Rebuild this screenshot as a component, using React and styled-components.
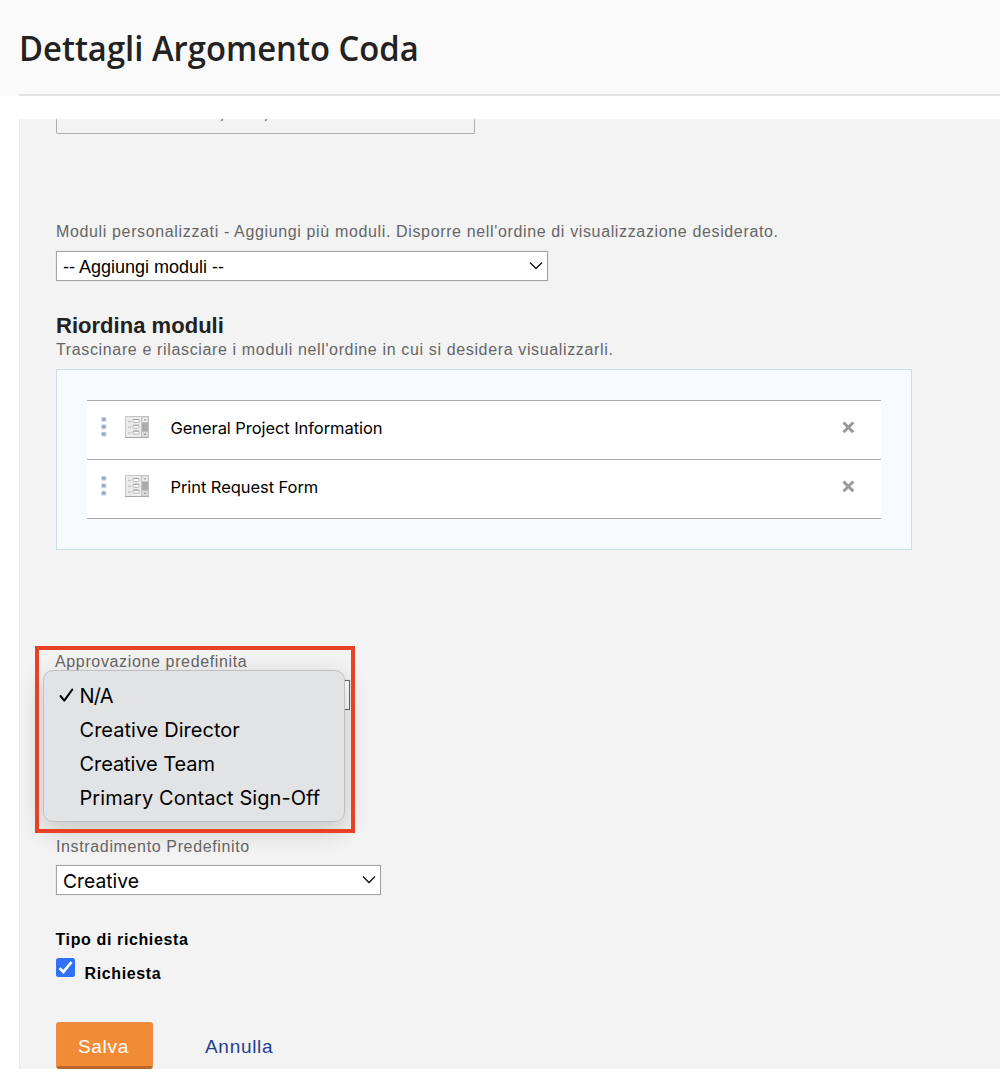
import React, { useState } from "react";
import styled, { createGlobalStyle } from "styled-components";

const Global = createGlobalStyle`
  *, *::before, *::after { box-sizing: border-box; }
  body { margin: 0; background: #fff; font-family: "Liberation Sans", Arial, sans-serif; }
`;

const Page = styled.div`
  height: 1081px;
  overflow: hidden;
  background: #fff;
`;

const Header = styled.header`
  height: 96px;
  padding-left: 19px;
  background: #fafafa;
`;

const Title = styled.h1`
  height: 96px;
  margin: 0;
  border-bottom: 2px solid #e3e3e3;
  color: #222;
  font: 600 35px/95px "Open Sans", sans-serif;
  white-space: nowrap;
`;

const TitleText = styled.span`
  display: inline-block;
  transform: scaleX(0.937);
  transform-origin: 0 50%;
`;

const Panel = styled.main`
  display: flex;
  flex-direction: column;
  align-items: flex-start;
  height: 950px;
  margin: 23px 0 0 19px;
  padding-left: 36px;
  border-left: 1px solid #e9e9e9;
  background: #f3f3f3;
  overflow: hidden;

  > * { flex-shrink: 0; }
`;

const ClippedInput = styled.div`
  display: flex;
  gap: 42px;
  width: 419px;
  height: 15px;
  padding-left: 164px;
  overflow: hidden;
  border: 1px solid #adadad;
  border-top: 0;
  border-radius: 0 0 2px 2px;
`;

const Descender = styled.i`
  width: 2px;
  height: 2px;
  background: #7b93bd;
  transform: skewX(-20deg);
`;

const Label = styled.div`
  height: 20px;
  margin-top: ${(p) => p.$top || 0}px;
  margin-left: ${(p) => p.$shift || 0}px;
  color: #666;
  font-size: 16px;
  line-height: ${(p) => p.$line || 20}px;
  letter-spacing: 0.64px;
  white-space: nowrap;
`;

const SelectBox = styled.div`
  display: flex;
  align-items: center;
  justify-content: space-between;
  width: ${(p) => p.$width}px;
  height: 30px;
  margin-top: ${(p) => p.$top}px;
  padding: 0 4px 0 6px;
  border: 1px solid ${(p) => p.$border || "#a3a3a3"};
  outline: 1px solid #ececec;
  background: #fff;
  color: #000;
  font: ${(p) => p.$font || '18px "Liberation Sans", Arial, sans-serif'};
`;

const SelectText = styled.span`
  padding-top: ${(p) => p.$drop}px;
`;

const Heading = styled.h2`
  height: 26px;
  margin: 32px 0 0;
  color: #222;
  font-size: 22px;
  line-height: 26px;
  letter-spacing: 0.03px;
`;

const SortArea = styled.section`
  width: 856px;
  height: 181px;
  margin-top: 9px;
  padding: 30px 30px 0;
  border: 1px solid #c9dfea;
  background: #f6fbff;
`;

const SortList = styled.ul`
  margin: 0;
  padding: 0;
  border-top: 1px solid #aaa;
  list-style: none;
`;

const SortRow = styled.li`
  display: flex;
  align-items: center;
  height: 59px;
  padding: 0 26px 6px 14px;
  border-bottom: 1px solid #aaa;
  background: #fff;
`;

const RowName = styled.span`
  flex: 1;
  padding: 1px 0 0 21.5px;
  color: #000;
  font: 16.5px/24px Inter, sans-serif;
  letter-spacing: -0.07px;
`;

const ApprovalField = styled.section`
  position: relative;
  width: 294px;
  margin-top: 101px;
`;

const Highlight = styled.div`
  position: absolute;
  top: -5px;
  left: -21px;
  width: 320px;
  height: 187px;
  border: 4px solid #e94125;
`;

const Popup = styled.ul`
  position: absolute;
  top: 19px;
  left: -13px;
  width: 302px;
  height: 152px;
  margin: 0;
  padding: 8px 0;
  border: 1px solid #c0c0c1;
  border-radius: 10px;
  background: #e2e3e5;
  box-shadow: 0 8px 26px rgba(0, 0, 0, 0.2);
  list-style: none;
`;

const Option = styled.li`
  display: flex;
  align-items: center;
  height: 34px;
  padding-left: 15px;
  color: #000;
  font: 20px/34px Inter, sans-serif;
  letter-spacing: ${(p) => p.$spacing}px;
  white-space: nowrap;
`;

const CheckSlot = styled.span`
  display: flex;
  width: 20.5px;
`;

const Strong = styled.div`
  height: 20px;
  margin-top: ${(p) => p.$top || 0}px;
  margin-left: -0.5px;
  color: #000;
  font-size: 16px;
  font-weight: 700;
  line-height: 22px;
  letter-spacing: 0.62px;
`;

const CheckRow = styled.button`
  display: flex;
  align-items: flex-start;
  gap: 10px;
  margin-top: 9px;
  padding: 0;
  border: 0;
  background: none;
  font-family: inherit;
  text-align: left;
`;

const CheckSquare = styled.span`
  display: flex;
  width: 19px;
  height: 19px;
  border-radius: 2.5px;
  background: #2f72f6;
`;

const Actions = styled.div`
  display: flex;
  gap: 52px;
  margin-top: 39px;
`;

const SaveButton = styled.button`
  width: 97px;
  height: 47px;
  padding: 4px 2px 0 0;
  border: 1px solid #ee8c45;
  border-bottom: 3px solid #bb6528;
  border-radius: 3px;
  background: #f18b36;
  color: #fff;
  font: 19px "Liberation Sans", Arial, sans-serif;
  letter-spacing: 0.7px;
`;

const CancelLink = styled.a`
  color: #1f3f91;
  font-size: 19px;
  line-height: 49px;
  letter-spacing: 0.7px;
`;

const Chevron = () => (
  <svg width="14" height="10" viewBox="0 0 14 10" fill="none">
    <path d="M1 1.5 7 7.5 13 1.5" stroke="#111" strokeWidth="1.3" />
  </svg>
);

const Grip = () => (
  <svg width="6" height="20" viewBox="0 0 6 20">
    {[0, 7.4, 14.8].map((y) => (
      <g key={y}>
        <rect x="0.3" y={y + 0.2} width="5" height="4.6" rx="1" fill="#c3d0da" />
        <rect x="1" y={y + 0.8} width="3.4" height="2.8" fill="#98aaba" />
      </g>
    ))}
  </svg>
);

const IconCell = styled.span`
  display: flex;
  margin-left: 18px;
`;

const FormIcon = () => (
  <svg width="24" height="22" viewBox="0 0 24 22">
    <rect x="0.5" y="0.5" width="23" height="21" fill="#ebebeb" stroke="#c6c6c6" />
    <path d="M0 21.5h24" stroke="#a5a5a5" />
    <rect x="16.5" y="1" width="6.5" height="20" fill="#d5d5d5" stroke="#b9b9b9" strokeWidth="0.7" />
    <rect x="17" y="6.5" width="6" height="9" fill="#ababab" />
    <rect x="17.5" y="1.5" width="5" height="4.7" fill="#eee" />
    <rect x="17.5" y="16" width="5" height="4.5" fill="#ddd" />
    <path d="M19.3 3.9h1.4M19.3 18.4h1.4" stroke="#777" strokeWidth="1.3" />
    {[3.5, 9.3, 15.1].map((y) => (
      <g key={y}>
        <rect x="7.8" y={y} width="6.4" height="3" rx="1" fill="#fafafa" stroke="#bababa" />
        <path d={`M8 ${y}h6`} stroke="#a2a2a2" />
        <path d={`M3 ${y + 2}h3`} stroke="#bcbcbc" strokeWidth="1.2" />
      </g>
    ))}
  </svg>
);

const RemoveIcon = () => (
  <svg width="13" height="13" viewBox="0 0 13 13">
    <path d="M1.5 1.5 11.3 11.2M11.3 1.5 1.5 11.2" stroke="#999" strokeWidth="3" />
  </svg>
);

const MenuCheck = () => (
  <svg width="16" height="17" viewBox="0 0 16 17" fill="none">
    <path d="M1.5 8 5.3 12.6 13.3 1.5" stroke="#000" strokeWidth="2" strokeLinecap="round" strokeLinejoin="round" />
  </svg>
);

const BoxCheck = () => (
  <svg width="19" height="19" viewBox="0 0 19 19" fill="none">
    <path d="M3.6 10.1 7.4 13.9 15.5 4" stroke="#fff" strokeWidth="2.7" />
  </svg>
);

const forms = ["General Project Information", "Print Request Form"];

const approvals = [
  { name: "N/A", spacing: -0.8 },
  { name: "Creative Director", spacing: 0.03 },
  { name: "Creative Team", spacing: -0.08 },
  { name: "Primary Contact Sign-Off", spacing: 0.07 },
];

export default function App() {
  const [checked, setChecked] = useState(true);
  return (
    <Page>
      <Global />
      <Header>
        <Title>
          <TitleText>Dettagli Argomento Coda</TitleText>
        </Title>
      </Header>
      <Panel>
        <ClippedInput>
          <Descender />
          <Descender />
        </ClippedInput>
        <Label $top={88}>
          Moduli personalizzati - Aggiungi più moduli. Disporre nell'ordine di visualizzazione desiderato.
        </Label>
        <SelectBox $width={492} $top={9}>
          <SelectText $drop={3}>-- Aggiungi moduli --</SelectText>
          <Chevron />
        </SelectBox>
        <Heading>Riordina moduli</Heading>
        <Label $top={1}>Trascinare e rilasciare i moduli nell'ordine in cui si desidera visualizzarli.</Label>
        <SortArea>
          <SortList>
            {forms.map((name) => (
              <SortRow key={name}>
                <Grip />
                <IconCell>
                  <FormIcon />
                </IconCell>
                <RowName>{name}</RowName>
                <RemoveIcon />
              </SortRow>
            ))}
          </SortList>
        </SortArea>
        <ApprovalField>
          <Label $shift={-1} $line={22}>Approvazione predefinita</Label>
          <SelectBox $width={294} $top={9} $border="#666" />
          <Popup>
            {approvals.map(({ name, spacing }, index) => (
              <Option key={name} $spacing={spacing}>
                <CheckSlot>{index === 0 && <MenuCheck />}</CheckSlot>
                {name}
              </Option>
            ))}
          </Popup>
          <Highlight />
        </ApprovalField>
        <Label $top={126} $line={22}>Instradimento Predefinito</Label>
        <SelectBox $width={325} $top={9} $font="19.3px Inter, sans-serif">
          <SelectText $drop={1}>Creative</SelectText>
          <Chevron />
        </SelectBox>
        <Strong $top={34}>Tipo di richiesta</Strong>
        <CheckRow type="button" role="checkbox" aria-checked={checked} onClick={() => setChecked(!checked)}>
          <CheckSquare>{checked && <BoxCheck />}</CheckSquare>
          <Strong $top={5}>Richiesta</Strong>
        </CheckRow>
        <Actions>
          <SaveButton>Salva</SaveButton>
          <CancelLink>Annulla</CancelLink>
        </Actions>
      </Panel>
    </Page>
  );
}
